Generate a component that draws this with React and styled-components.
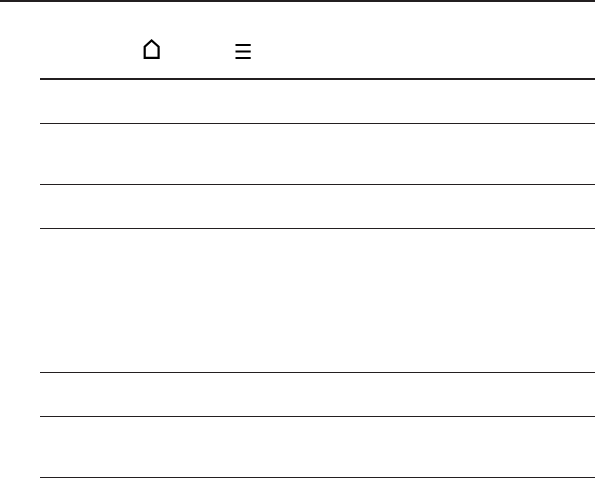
import React from "react";
import styled, { createGlobalStyle } from "styled-components";

const rows = [44, 61, 44, 144, 44, 61];

function App() {
  return (
    <>
      <GlobalStyle />
      <Page>
        <Header>
          <HomeIcon viewBox="0 0 18 21" aria-label="Home">
            <path d="M1.7 18.8V7.8L8.6 1.5L15.6 7.8V18.8Z" />
          </HomeIcon>
          <MenuIcon viewBox="0 0 16 17" aria-label="Menu">
            <path d="M0.5 2H15.7M0.5 8.5H15.7M0.5 15H15.7" />
          </MenuIcon>
        </Header>
        <Table>
          {rows.map((height, index) => (
            <Row key={index} $height={height} />
          ))}
        </Table>
      </Page>
    </>
  );
}

const GlobalStyle = createGlobalStyle`
  body {
    margin: 0;
    background-color: #fff;
    font-family: "Liberation Sans", Arial, sans-serif;
  }
`;

const Page = styled.main`
  box-sizing: border-box;
  height: 478px;
  padding-left: 40px;
  overflow: hidden;
  background: linear-gradient(#231f20, #231f20) top / 100% 2px no-repeat;
`;

const Header = styled.header`
  box-sizing: border-box;
  display: flex;
  align-items: flex-start;
  gap: 74px;
  height: 80px;
  padding: 39px 0 0 103px;
  border-bottom: 2px solid #231f20;
`;

const HomeIcon = styled.svg`
  width: 18px;
  height: 21px;
  fill: none;
  stroke: #000;
  stroke-width: 2.2px;
`;

const MenuIcon = styled.svg`
  width: 16px;
  height: 17px;
  margin-top: 4px;
  fill: none;
  stroke: #000;
  stroke-width: 2.2px;
`;

const Table = styled.section`
  display: flex;
  flex-direction: column;
`;

const Row = styled.div`
  box-sizing: border-box;
  height: ${({ $height }) => $height}px;
  border-bottom: 1px solid #231f20;
`;

export default App;
